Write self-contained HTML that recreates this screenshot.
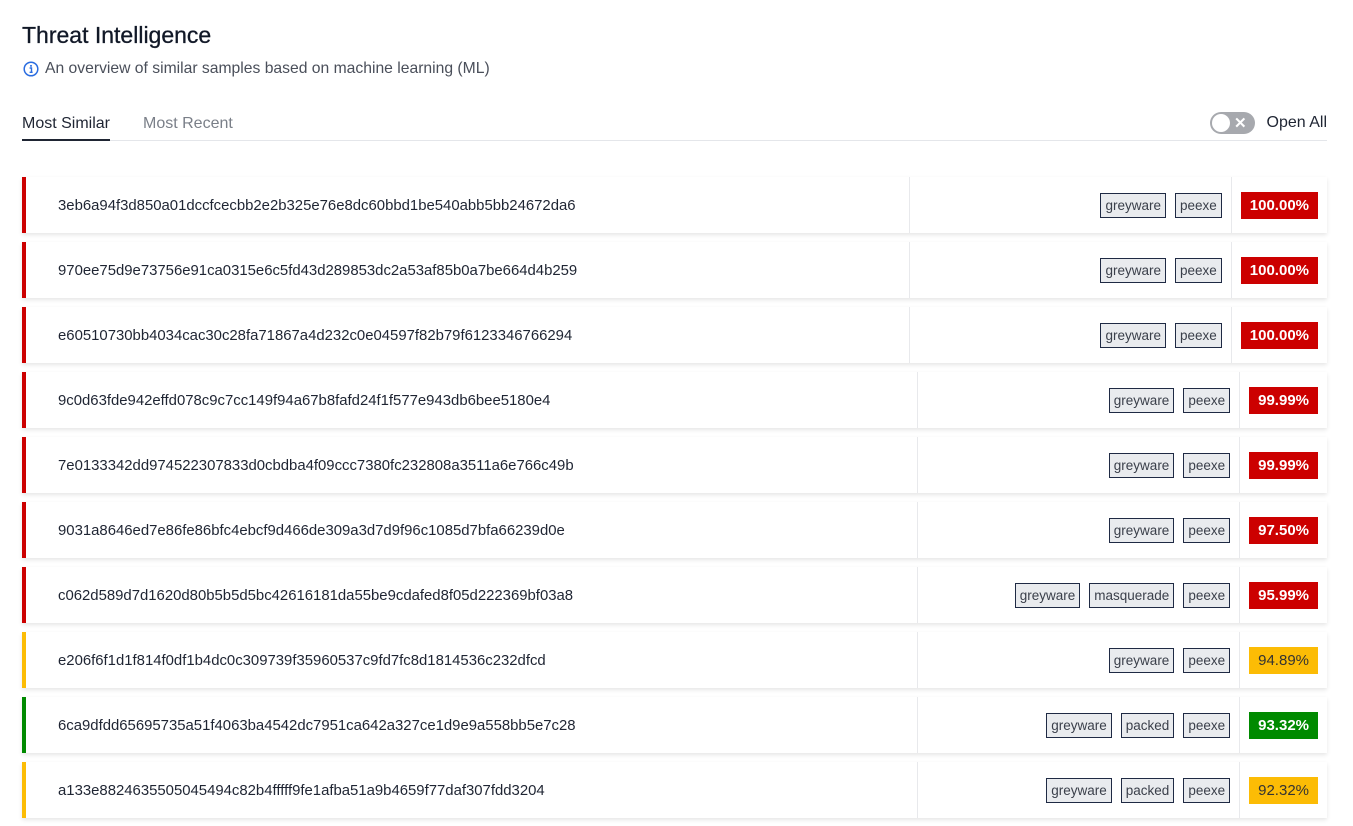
<!DOCTYPE html>
<html><head><meta charset="utf-8"><style>
*{box-sizing:border-box;margin:0;padding:0}
body{width:1353px;height:826px;background:#fff;font-family:"Liberation Sans",sans-serif;color:#1f2533;position:relative;overflow:hidden}
h1{position:absolute;left:22px;top:22px;font-size:23px;font-weight:normal;color:#111827;-webkit-text-stroke:0.3px #111827}
.sub{position:absolute;left:23px;top:60px;font-size:15.7px;color:#4a4f5a;display:flex;align-items:center;gap:6px}
.tabs{position:absolute;left:22px;top:110px;width:1305px;height:31px;border-bottom:1px solid #e4e6ea}
.tab{position:absolute;top:5px;font-size:16px}
.t1{left:0;color:#1f2533;border-bottom:2px solid #1f2533;height:26px}
.t2{left:121px;color:#7a7f88}
.tog{position:absolute;right:0;top:2px;display:flex;align-items:center;gap:12px;font-size:16px}
.sw{width:45px;height:22px;border-radius:11px;background:#a7a9ae;position:relative}
.sw:before{content:"";position:absolute;left:2px;top:2px;width:18px;height:18px;border-radius:50%;background:#fff}
.sw span{position:absolute;right:8px;top:2px;color:#fff;font-size:15px;font-weight:bold}
.row{position:absolute;left:22px;width:1305px;height:56px;background:#fff;border-left:4px solid #cc0000;box-shadow:0 2px 4px rgba(0,0,0,0.1);display:flex;align-items:center}
.h{flex:1;padding-left:32px;padding-top:2px;font-size:14.9px;color:#1f2533}
.tags{width:322px;height:100%;border-left:1px solid #e8e9ec;display:flex;justify-content:flex-end;align-items:center;gap:9px;padding-right:9px}
.tag{border:1px solid #1f2a44;background:#e9ebee;font-size:13.5px;color:#3a3f4a;padding:1px 4px 0;height:25px;line-height:22px}
.sc{height:100%;border-left:1px solid #e8e9ec;display:flex;align-items:center;padding:0 9px}
.b{height:27px;line-height:27px;font-size:15px;font-weight:bold;color:#fff;background:#cc0000;padding:0 9px}
.y{background:#fcbc05;color:#333;font-weight:normal}
.g{background:#008a00}
</style></head><body>
<h1>Threat Intelligence</h1>
<div class="sub"><svg width="16" height="16" viewBox="0 0 16 16"><circle cx="8" cy="8" r="6.8" fill="none" stroke="#2b6de0" stroke-width="1.5"/><circle cx="8" cy="4.9" r="1" fill="#2b6de0"/><path d="M6.6 7h1.9v4.2M6.6 11.3h3" stroke="#2b6de0" stroke-width="1.4" fill="none"/></svg>An overview of similar samples based on machine learning (ML)</div>
<div class="tabs"><div class="tab t1">Most Similar</div><div class="tab t2">Most Recent</div>
<div class="tog"><div class="sw"><span>✕</span></div>Open All</div></div>

<div class="row" style="top:177px"><div class="h">3eb6a94f3d850a01dccfcecbb2e2b325e76e8dc60bbd1be540abb5bb24672da6</div><div class="tags"><span class="tag">greyware</span><span class="tag">peexe</span></div><div class="sc"><span class="b">100.00%</span></div></div>
<div class="row" style="top:242px"><div class="h">970ee75d9e73756e91ca0315e6c5fd43d289853dc2a53af85b0a7be664d4b259</div><div class="tags"><span class="tag">greyware</span><span class="tag">peexe</span></div><div class="sc"><span class="b">100.00%</span></div></div>
<div class="row" style="top:307px"><div class="h">e60510730bb4034cac30c28fa71867a4d232c0e04597f82b79f6123346766294</div><div class="tags"><span class="tag">greyware</span><span class="tag">peexe</span></div><div class="sc"><span class="b">100.00%</span></div></div>
<div class="row" style="top:372px"><div class="h">9c0d63fde942effd078c9c7cc149f94a67b8fafd24f1f577e943db6bee5180e4</div><div class="tags"><span class="tag">greyware</span><span class="tag">peexe</span></div><div class="sc"><span class="b">99.99%</span></div></div>
<div class="row" style="top:437px"><div class="h">7e0133342dd974522307833d0cbdba4f09ccc7380fc232808a3511a6e766c49b</div><div class="tags"><span class="tag">greyware</span><span class="tag">peexe</span></div><div class="sc"><span class="b">99.99%</span></div></div>
<div class="row" style="top:502px"><div class="h">9031a8646ed7e86fe86bfc4ebcf9d466de309a3d7d9f96c1085d7bfa66239d0e</div><div class="tags"><span class="tag">greyware</span><span class="tag">peexe</span></div><div class="sc"><span class="b">97.50%</span></div></div>
<div class="row" style="top:567px"><div class="h">c062d589d7d1620d80b5b5d5bc42616181da55be9cdafed8f05d222369bf03a8</div><div class="tags"><span class="tag">greyware</span><span class="tag">masquerade</span><span class="tag">peexe</span></div><div class="sc"><span class="b">95.99%</span></div></div>
<div class="row" style="top:632px;border-left-color:#fcbc05"><div class="h">e206f6f1d1f814f0df1b4dc0c309739f35960537c9fd7fc8d1814536c232dfcd</div><div class="tags"><span class="tag">greyware</span><span class="tag">peexe</span></div><div class="sc"><span class="b y">94.89%</span></div></div>
<div class="row" style="top:697px;border-left-color:#008a00"><div class="h">6ca9dfdd65695735a51f4063ba4542dc7951ca642a327ce1d9e9a558bb5e7c28</div><div class="tags"><span class="tag">greyware</span><span class="tag">packed</span><span class="tag">peexe</span></div><div class="sc"><span class="b g">93.32%</span></div></div>
<div class="row" style="top:762px;border-left-color:#fcbc05"><div class="h">a133e8824635505045494c82b4fffff9fe1afba51a9b4659f77daf307fdd3204</div><div class="tags"><span class="tag">greyware</span><span class="tag">packed</span><span class="tag">peexe</span></div><div class="sc"><span class="b y">92.32%</span></div></div>
</body></html>
